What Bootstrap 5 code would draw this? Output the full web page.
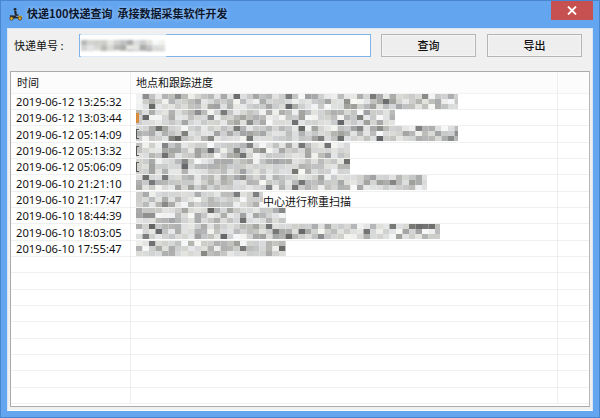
<!DOCTYPE html>
<html lang="zh-CN">
<head>
<meta charset="utf-8">
<title>快递100快递查询</title>
<link href="https://cdn.jsdelivr.net/npm/bootstrap@5.3.0/dist/css/bootstrap.min.css" rel="stylesheet">
<style>
html,body{margin:0;height:100%;overflow:hidden;background:#64a5f0}
body{font-family:"Noto Sans","Noto Sans CJK SC",sans-serif;font-size:11px;color:#111;line-height:1}
.win-frame{width:600px;height:418px;background:#64a5f0;border:1px solid #4a86d0;padding:0 6px 6px}
.win-title{height:27px;padding-left:1px;padding-bottom:2px;gap:4px;position:relative}
.win-name{font-family:"Noto Sans CJK SC",sans-serif;font-size:11px;font-weight:700;color:#0a1830;white-space:pre;text-shadow:0 0 4px rgba(255,255,255,.45)}
.win-close{position:absolute;top:0;right:0;width:42px;height:19px;background:#c75050;border:0;border-radius:0;padding:0;display:flex;align-items:center;justify-content:center}
.win-body{height:383px;background:#f0f0f0;border:1px solid #d8e6f6;border-bottom-color:#fff;padding:5px 2px 4px 2px}
.bar-row{height:23px;margin-bottom:14px;padding-left:4px}
.bar-label{width:65px;flex:none;font-family:"Noto Sans CJK SC",sans-serif;font-size:11px;white-space:pre}
.code-box{width:292px;flex:none;height:23px;border:1px solid #7eb4ea;border-radius:0;background:#fff;padding:0;margin-right:10px;position:relative;display:block}
.code-smear{position:absolute;left:0;top:-1px;width:87px;height:23px;background:rgba(255,255,255,.75);border-radius:2px}
.code-blur{position:absolute;left:1px;top:5px}
.win-btn{width:95px;flex:none;height:23px;padding:0;border:1px solid #b5b5b5;border-radius:0;background:#eee;font-family:"Noto Sans CJK SC",sans-serif;font-size:11px;font-weight:500;color:#111;line-height:1;box-shadow:inset 0 0 0 1px #f5f5f5}
.win-btn + .win-btn{margin-left:11px}
.grid-wrap{width:580px;height:336px;background:#fff;border:1px solid #ababab;border-right-color:#b8b8b8;overflow:hidden}
.log-grid{width:578px;table-layout:fixed;margin:0;border-collapse:separate;border-spacing:0;--bs-table-bg:transparent}
.log-grid th,.log-grid td{padding:0;border:0;border-bottom:1px solid #f0f0f0;border-right:1px solid #eee;vertical-align:middle;font-weight:400;overflow:visible;white-space:nowrap;height:16px;color:#111;box-sizing:border-box}
.log-grid thead th{height:22px;background:#fcfcfc;border-bottom:1px solid #f3f3f3;font-family:"Noto Sans CJK SC",sans-serif;font-size:11px}
.log-grid thead th:last-child,.log-grid td:last-child{border-right:0}
.log-grid tbody tr:nth-child(3n) td{height:17px}
.c-time{width:120px}.c-place{width:427px}
th.c-time{padding-left:6px!important}
th.c-place{padding-left:5px!important}
.stamp{font-family:"Noto Sans",sans-serif;font-size:11.2px;padding-left:5px!important;padding-top:1px!important}
.track{position:relative;padding-left:5px!important}
.mosaic{display:block;position:absolute;left:5px;top:0;filter:blur(.7px)}
.scan-text{position:absolute;left:132px;top:2px;font-family:"Noto Sans CJK SC",sans-serif;font-size:11px;line-height:14px;color:#111}
.brk{position:absolute;left:5px;top:3px;width:3px;height:10px;border:1px solid #555;border-right:0}
.brk-orange{background:#d98a3a;border:0;width:3px}
</style>
</head>
<body>
<div class="win-frame">
  <div class="win-title d-flex align-items-center">
    <svg width="15" height="14" viewBox="0 0 17 15" aria-hidden="true">
      <circle cx="8" cy="2.2" r="1.6" fill="#222"/>
      <path d="M7 4 L9.5 4 L10 8 L12 8 L12 9.5 L8 9.5 Z" fill="#222"/>
      <path d="M2 9 L8 9.2 L10 11 L15 10 L15.5 12 L3 13 Z" fill="#2b2b2b"/>
      <rect x="11.5" y="9.5" width="4.5" height="2" fill="#e8b21e"/>
      <circle cx="4" cy="12.5" r="2" fill="#e2a91a" stroke="#333" stroke-width=".8"/>
      <circle cx="13.5" cy="12.5" r="2" fill="#e2a91a" stroke="#333" stroke-width=".8"/>
    </svg>
    <span class="win-name">快递100快递查询  承接数据采集软件开发</span>
    <button class="win-close btn" type="button" aria-label="关闭">
      <svg width="10" height="9" viewBox="0 0 10 9"><path d="M1 .5 L9 8.5 M9 .5 L1 8.5" stroke="#fff" stroke-width="1.8" fill="none"/></svg>
    </button>
  </div>
  <div class="win-body">
    <div class="bar-row d-flex align-items-center">
      <span class="bar-label">快递单号 :</span>
      <div class="code-box"><span class="code-smear"></span><svg class="code-blur"></svg></div>
      <button class="win-btn btn" type="button">查询</button>
      <button class="win-btn btn" type="button">导出</button>
    </div>
    <div class="grid-wrap">
      <table class="log-grid table">
        <colgroup><col class="c-time"><col class="c-place"><col></colgroup>
        <thead><tr><th class="c-time">时间</th><th class="c-place">地点和跟踪进度</th><th></th></tr></thead>
        <tbody id="logBody"></tbody>
      </table>
    </div>
  </div>
</div>
<script>
var data=[["2019-06-12 13:25:32",322],["2019-06-12 13:03:44",259],["2019-06-12 05:14:09",322],["2019-06-12 05:13:32",214],["2019-06-12 05:06:09",214],["2019-06-10 21:21:10",291],["2019-06-10 21:17:47",127],["2019-06-10 18:44:39",150],["2019-06-10 18:03:05",304],["2019-06-10 17:55:47",150]];
var seed=13;
function rnd(){seed=(seed*16807)%2147483647;return seed/2147483647;}
function cells(w,h){
  var s="",cw=6.5,ch=5;
  for(var y=0;y<h;y+=ch){
    for(var x=0;x<w;x+=cw){
      var r=rnd(),g;
      if(r<.08)g=248-Math.floor(rnd()*12);
      else if(r<.6)g=200+Math.floor(rnd()*32);
      else if(r<.93)g=160+Math.floor(rnd()*40);
      else g=100+Math.floor(rnd()*45);
      var t=Math.floor(rnd()*8)-4;
      s+='<rect x="'+x+'" y="'+y+'" width="'+cw+'" height="'+ch+'" fill="rgb('+g+','+(g+1)+','+(g+t)+')"/>';
    }
  }
  return s;
}
var tb=document.getElementById("logBody"),html="";
for(var i=0;i<19;i++){
  if(i<data.length){
    var w=data[i][1];
    var svg='<svg class="mosaic" width="'+w+'" height="15" viewBox="0 0 '+w+' 15">'+cells(w,15)+'</svg>';
    var extra=i==6?'<span class="scan-text">中心进行称重扫描</span>':'';
    if(i==1)extra='<span class="brk brk-orange"></span>';
    if(i>=2&&i<=4)extra='<span class="brk"></span>';
    html+='<tr><td class="stamp">'+data[i][0]+'</td><td class="track">'+svg+extra+'</td><td></td></tr>';
  }else{
    html+='<tr><td></td><td></td><td></td></tr>';
  }
}
tb.innerHTML=html;
var c=document.querySelector(".code-blur");
c.setAttribute("width",84);c.setAttribute("height",11);c.setAttribute("viewBox","0 0 84 11");
c.style.filter="blur(.8px)";c.innerHTML=cells(84,11);
</script>
<script src="https://cdn.jsdelivr.net/npm/bootstrap@5.3.0/dist/js/bootstrap.bundle.min.js"></script>
</body>
</html>
